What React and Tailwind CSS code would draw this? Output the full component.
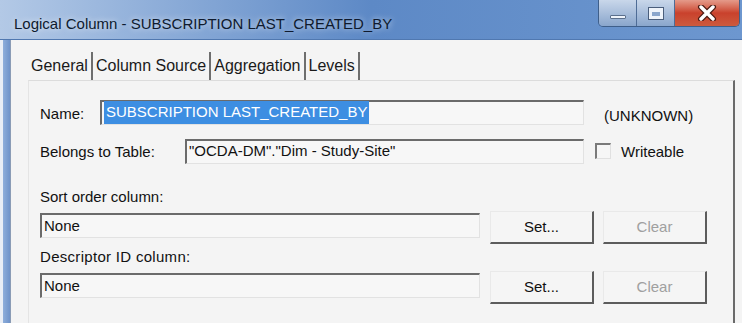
import React from "react";

const font = "font-['Liberation_Sans',Arial,sans-serif]";

const Field = ({ className, children }) => (
  <div
    className={`h-[25px] flex items-center border-t-2 border-l-2 border-t-[#6b6b6b] border-l-[#6b6b6b] border-b border-r border-b-[#e2e2e2] border-r-[#e2e2e2] bg-[#f7f7f7] px-[2px] text-[15px] text-[#111] ${className}`}
  >
    {children}
  </div>
);

const Button = ({ children, disabled }) => (
  <div
    className={`w-[104px] h-[33px] flex items-center justify-center border-t border-l border-t-[#e9e9e9] border-l-[#e9e9e9] border-b-2 border-r-2 border-b-[#5c5c5c] border-r-[#5c5c5c] bg-[#f5f5f5] text-[15px] ${disabled ? "text-[#a0a0a0]" : "text-[#111]"}`}
  >
    {children}
  </div>
);

const Tab = ({ label }) => (
  <div className="flex items-center h-full">
    <span className="px-[3px] pt-[5px] text-[16px] text-[#1a1a1a]">{label}</span>
    <span className="w-[2px] h-[28px] bg-[#6e6e6e] mt-[6px]" />
  </div>
);

export default function App() {
  return (
    <div className={`w-[742px] h-[323px] overflow-hidden flex flex-col bg-[#f4f4f4] ${font}`}>
      {/* title bar */}
      <div className="h-[40px] shrink-0 flex items-start bg-gradient-to-r from-[#b3c9e6] via-[#5d89c6] to-[#6d97cf] border-b border-[#5078b0]">
        <div className="flex-1 pl-[14px] pt-[13px] text-[15px] text-[#0e1a2e] [text-shadow:0_0_6px_rgba(255,255,255,0.8)]">
          Logical Column - SUBSCRIPTION LAST_CREATED_BY
        </div>
        <div className="flex h-[27px] mr-[2px] rounded-b-[5px] overflow-hidden border border-t-0 border-[#3f5f8a]">
          <div className="w-[38px] flex items-center justify-center bg-gradient-to-b from-[#c9d7ea] to-[#8aa6cc] border-r border-[#4e6c96]">
            <span className="block w-[16px] h-[4px] mt-[8px] bg-[#eef3fa] border border-[#5b6f8c] rounded-[1px]" />
          </div>
          <div className="w-[38px] flex items-center justify-center bg-gradient-to-b from-[#c9d7ea] to-[#8aa6cc] border-r border-[#4e6c96]">
            <span className="block w-[14px] h-[11px] border-[3px] border-t-[4px] border-[#eef3fa] outline outline-1 outline-[#4a5e7c] bg-[#8aa6cc]" />
          </div>
          <div className="w-[64px] flex items-center justify-center bg-gradient-to-b from-[#e49a8a] via-[#c9412c] to-[#cd5a3e]">
            <svg width="20" height="16" viewBox="0 0 20 16">
              <path d="M4 2 L16 14 M16 2 L4 14" stroke="#4b1a12" strokeWidth="6" strokeLinecap="round" />
              <path d="M4 2 L16 14 M16 2 L4 14" stroke="#ffffff" strokeWidth="3.5" strokeLinecap="round" />
            </svg>
          </div>
        </div>
      </div>

      <div className="flex flex-1">
        {/* left frame */}
        <div className="w-[11px] shrink-0 flex">
          <div className="w-[3px] bg-[#e9eef6]" />
          <div className="w-[7px] bg-gradient-to-r from-[#8eaedb] to-[#6f93c9]" />
          <div className="w-[1px] bg-[#8a9bb5]" />
        </div>

        {/* client */}
        <div className="flex-1 flex flex-col pt-[6px] pl-[17px] pr-[7px]">
          <div className="h-[34px] flex items-stretch pl-0">
            <Tab label="General" />
            <Tab label="Column Source" />
            <Tab label="Aggregation" />
            <Tab label="Levels" />
          </div>

          <div className="flex-1 border-t border-r-2 border-l border-t-[#dcdcdc] border-r-[#6a6a6a] border-l-[#e4e4e4] pl-[11px] pt-[18px] text-[15px] text-[#111]">
            <div className="flex items-center h-[26px]">
              <span className="w-[60px] pt-[4px]">Name:</span>
              <Field className="w-[484px]">
                <span className="bg-[#3d8ee2] text-white px-[2px]">SUBSCRIPTION LAST_CREATED_BY</span>
              </Field>
              <span className="ml-[20px] mt-[8px]">(UNKNOWN)</span>
            </div>

            <div className="flex items-center h-[26px] mt-[13px]">
              <span className="w-[145px] pt-[2px]">Belongs to Table:</span>
              <Field className="w-[399px]">"OCDA-DM"."Dim - Study-Site"</Field>
              <span className="ml-[11px] w-[16px] h-[16px] border-t-2 border-l-2 border-t-[#7a7a7a] border-l-[#7a7a7a] border-b border-r border-b-[#e0e0e0] border-r-[#e0e0e0] bg-[#f6f6f6]" />
              <span className="ml-[10px] pt-[2px]">Writeable</span>
            </div>

            <div className="mt-[25px] leading-[16px]">Sort order column:</div>
            <div className="flex items-start mt-[6px]">
              <Field className="w-[440px] mt-[2px]">None</Field>
              <div className="ml-[10px] flex gap-[9px]">
                <Button>Set...</Button>
                <Button disabled>Clear</Button>
              </div>
            </div>

            <div className="mt-[5px] leading-[16px] tracking-[0.3px]">Descriptor ID column:</div>
            <div className="flex items-start mt-[6px]">
              <Field className="w-[440px] mt-[2px]">None</Field>
              <div className="ml-[10px] flex gap-[9px]">
                <Button>Set...</Button>
                <Button disabled>Clear</Button>
              </div>
            </div>
          </div>
        </div>
      </div>
    </div>
  );
}
